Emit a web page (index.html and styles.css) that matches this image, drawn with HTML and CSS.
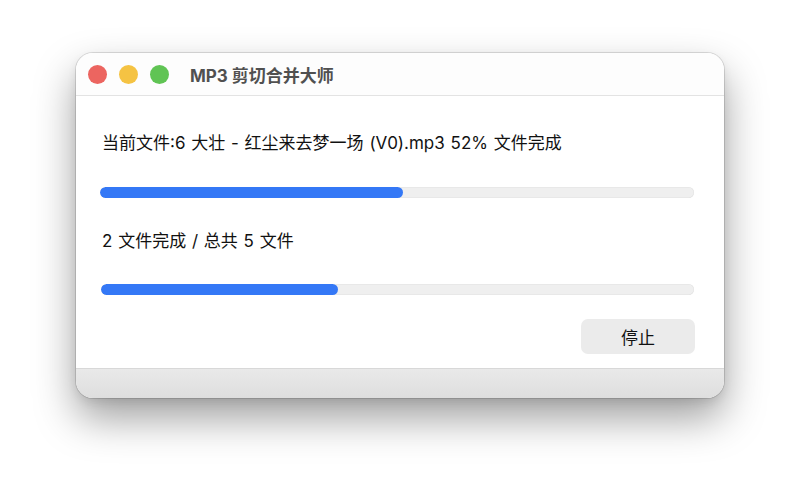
FILE: index.html
```html
<!DOCTYPE html>
<html lang="zh-CN">
<head>
<meta charset="utf-8">
<title>MP3剪切合并大师</title>
<link rel="stylesheet" href="styles.css">
</head>
<body>
<div class="window">
  <div class="titlebar">
    <div class="lights">
      <span class="light red"></span>
      <span class="light yellow"></span>
      <span class="light green"></span>
    </div>
    <div class="title">MP3 剪切合并大师</div>
  </div>
  <div class="content">
    <div class="label">当前文件:6 大壮 - 红尘来去梦一场 (V0).mp3 52% 文件完成</div>
    <div class="track track-one"><div class="fill" style="width:51%"></div></div>
    <div class="label">2 文件完成 / 总共 5 文件</div>
    <div class="track track-two"><div class="fill" style="width:40%"></div></div>
    <div class="actions"><button class="btn">停止</button></div>
  </div>
  <div class="footer"></div>
</div>
</body>
</html>
```

FILE: styles.css
```css
html, body {
  margin: 0;
  padding: 0;
  background: #ffffff;
}
body {
  width: 800px;
  height: 500px;
  overflow: hidden;
  padding: 53px 0 0 76px;
  box-sizing: border-box;
  font-family: "Inter", "Noto Sans CJK SC", sans-serif;
}
.window {
  width: 648px;
  height: 345px;
  border-radius: 17px;
  background: #ffffff;
  display: flex;
  flex-direction: column;
  overflow: hidden;
  box-shadow: 0 0 0 1px rgba(0,0,0,0.12), 0 20px 42px rgba(0,0,0,0.38), 0 4px 10px rgba(0,0,0,0.08);
}
.titlebar {
  height: 42px;
  flex: none;
  display: flex;
  align-items: center;
  border-bottom: 1px solid #e3e3e3;
  background: #fdfdfd;
}
.lights {
  display: flex;
  gap: 12px;
  padding-left: 12px;
}
.light {
  width: 19px;
  height: 19px;
  border-radius: 50%;
  display: block;
}
.red { background: #ec6560; }
.yellow { background: #f5c343; }
.green { background: #60c454; }
.title {
  margin-left: 21px;
  font-size: 17px;
  font-weight: bold;
  color: #505050;
}
.content {
  flex: 1;
  display: flex;
  flex-direction: column;
  padding: 36px 30px 0 24px;
}
.label {
  font-size: 17px;
  font-weight: 400;
  line-height: 22px;
  color: #111111;
  padding-left: 2px;
  height: 22px;
  word-spacing: 1px;
  white-space: nowrap;
}
.track {
  height: 11px;
  border-radius: 6px;
  background: #efefef;
  box-shadow: inset 0 0 0 0.5px #e2e2e2;
  margin: 33px 0 32px;
  overflow: hidden;
}
.track-two {
  margin: 32px 0 24px 1px;
}
.fill {
  height: 100%;
  border-radius: 6px;
  background: #3478f6;
}
.actions {
  display: flex;
  justify-content: flex-end;
  margin-right: -1px;
}
.btn {
  width: 114px;
  height: 35px;
  border: none;
  border-radius: 7px;
  background: #ebebeb;
  font-family: "Inter", "Noto Sans CJK SC", sans-serif;
  font-size: 17px;
  font-weight: 400;
  color: #111111;
  padding: 0;
}
.footer {
  height: 29px;
  flex: none;
  border-top: 1px solid #d8d8d8;
  background: linear-gradient(#e9e9e9, #dedede);
}
```
